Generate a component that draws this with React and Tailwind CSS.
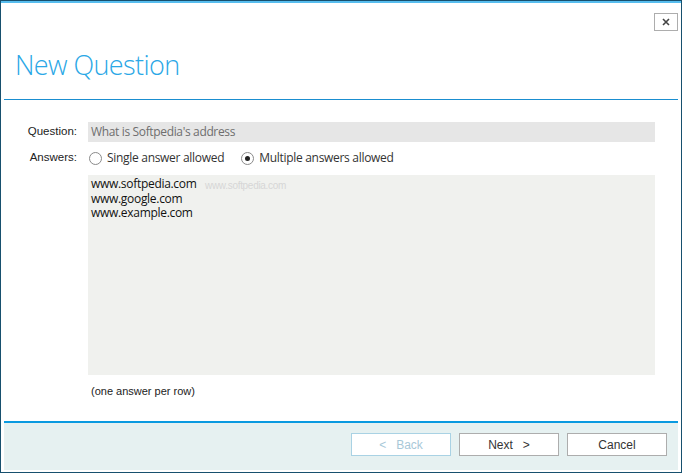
import { useState } from 'react'

const SEGOE = { fontFamily: '"Open Sans", "Noto Sans", sans-serif' }

function Radio({ checked, label, onClick }) {
  return (
    <button onClick={onClick} className="flex items-center gap-[5px] text-[12px] tracking-[-0.3px] text-[#333]">
      <span className="w-[13px] h-[13px] rounded-full border border-[#8a8a8a] bg-white flex items-center justify-center">
        {checked && <span className="w-[5px] h-[5px] rounded-full bg-[#222]" />}
      </span>
      <span>{label}</span>
    </button>
  )
}

function FooterButton({ children, disabled }) {
  return (
    <button
      disabled={disabled}
      className={`w-[100px] h-[23px] border bg-white text-[12px] flex items-center justify-center gap-[10px] ${disabled ? 'border-[#a9d2e4] text-[#a8c8d8]' : 'border-[#adadad] text-[#333]'}`}
      style={{ fontFamily: '"Liberation Sans", Arial, sans-serif' }}
    >
      {children}
    </button>
  )
}

export default function App() {
  const [multi, setMulti] = useState(true)
  const [answers, setAnswers] = useState('www.softpedia.com\nwww.google.com\nwww.example.com')

  return (
    <div className="w-[682px] h-[473px] bg-white border border-[#17506e] flex flex-col overflow-hidden">
      <div className="h-[2px] bg-[#57bdee] shrink-0" />

      {/* header */}
      <div className="relative h-[96px] shrink-0 px-[3px]">
        <button className="absolute right-[3px] top-[10px] w-[24px] h-[18px] border border-[#adadad] bg-white flex items-center justify-center">
          <svg width="8" height="8" viewBox="0 0 8 8"><path d="M1 1 L7 7 M7 1 L1 7" stroke="#444" strokeWidth="1.6" /></svg>
        </button>
        <div className="pl-[11px] pt-[45px] text-[27px] font-light leading-[34px] text-[#2aa7e6] tracking-[-0.6px]" style={SEGOE}>New Question</div>
      </div>
      <div className="mx-[3px] h-px bg-[#1a8ed0] shrink-0" />

      {/* body */}
      <div className="flex-1 pt-[22px]" style={{ fontFamily: '"Liberation Sans", Arial, sans-serif' }}>
        <div className="flex items-center h-[20px]">
          <div className="w-[76px] text-right text-[11.5px] text-[#222]">Question:</div>
          <div className="ml-[11px] w-[567px] h-[20px] bg-[#e6e6e6] flex items-center pl-[3px] text-[12px] tracking-[-0.35px] text-[#6e6e6e]" style={SEGOE}>
            What is Softpedia's address
          </div>
        </div>
        <div className="flex items-center h-[20px] mt-[6px]">
          <div className="w-[76px] text-right text-[11.5px] text-[#222]">Answers:</div>
          <div className="ml-[12px] flex items-center gap-[17px]" style={SEGOE}>
            <Radio checked={!multi} label="Single answer allowed" onClick={() => setMulti(false)} />
            <Radio checked={multi} label="Multiple answers allowed" onClick={() => setMulti(true)} />
          </div>
        </div>
        <div className="ml-[87px] mt-[7px] w-[567px] h-[200px] bg-[#f0f1ee] relative">
          <textarea
            value={answers}
            onChange={e => setAnswers(e.target.value)}
            className="w-full h-full resize-none bg-transparent outline-none px-[3px] pt-[2px] text-[12px] leading-[14.5px] tracking-[-0.3px] text-[#111]"
            style={SEGOE}
          />
          <span className="absolute left-[117px] top-[3px] text-[10px] tracking-[-0.3px] text-[#d6d6d6] pointer-events-none">www.softpedia.com</span>
        </div>
        <div className="ml-[90px] mt-[8px] text-[11px] text-[#222]">(one answer per row)</div>
      </div>

      {/* footer */}
      <div className="mx-[3px] mb-[2px] shrink-0">
        <div className="h-[2px] bg-[#0a9ae0]" />
        <div className="h-[47px] bg-[#e6f1f1] flex items-start justify-end gap-[8px] pr-[11px] pt-[10px]">
          <FooterButton disabled><span>&lt;</span><span>Back</span></FooterButton>
          <FooterButton><span>Next</span><span>&gt;</span></FooterButton>
          <FooterButton>Cancel</FooterButton>
        </div>
      </div>
    </div>
  )
}
